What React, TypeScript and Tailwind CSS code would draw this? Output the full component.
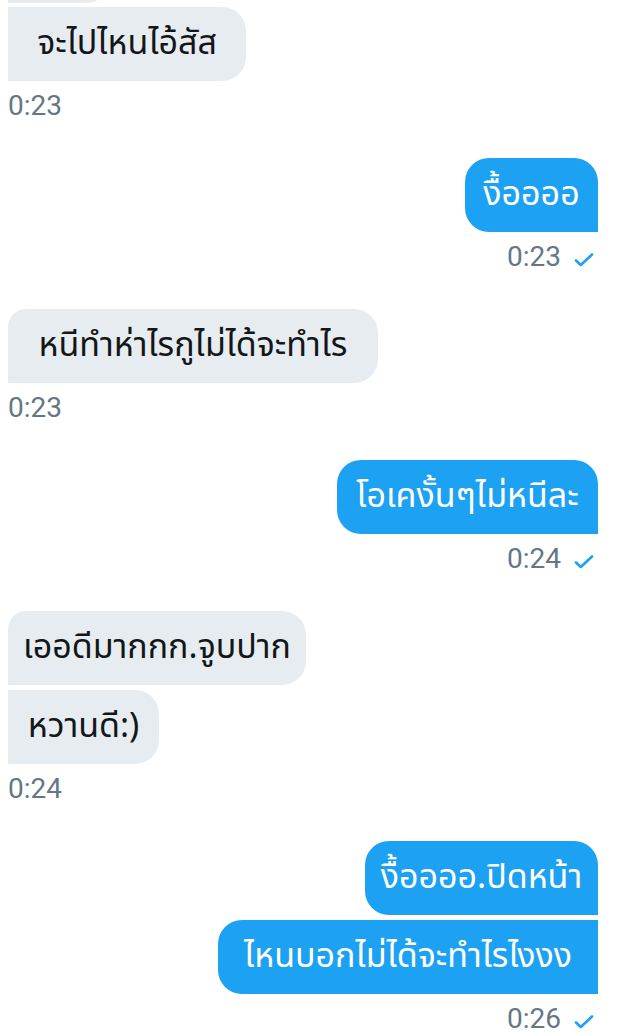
import React from "react";

type Msg = { text: string; w: number; cls: string };

const thai = { fontFamily: '"Noto Sans Thai", "Noto Sans", Roboto, sans-serif' };
const roboto = { fontFamily: 'Roboto, "Noto Sans", sans-serif' };

function Check() {
  return (
    <svg width="20" height="14" viewBox="0 0 20 14" className="ml-[13px] mb-[8px]">
      <path d="M2 7.5 L6.8 12 L18 1.5" fill="none" stroke="#1da1f2" strokeWidth="2.6" strokeLinecap="round" strokeLinejoin="round" />
    </svg>
  );
}

function Received({ text, w, cls }: Msg) {
  return (
    <div
      style={{ ...thai, width: w }}
      className={`ml-2 h-[74px] bg-[#e6ecf0] text-[#14171a] text-[34px] leading-[74px] text-center whitespace-nowrap ${cls}`}
    >
      {text}
    </div>
  );
}

function Sent({ text, w, cls }: Msg) {
  return (
    <div className="flex justify-end mr-[24px]">
      <div
        style={{ ...thai, width: w }}
        className={`h-[74px] bg-[#1da1f2] text-white text-[34px] leading-[74px] text-center whitespace-nowrap ${cls}`}
      >
        {text}
      </div>
    </div>
  );
}

function TimeLeft({ t }: { t: string }) {
  return (
    <div style={roboto} className="ml-2 mt-[7px] mb-[34px] h-[36px] leading-[36px] text-[28px] text-[#657786]">
      {t}
    </div>
  );
}

function TimeRight({ t }: { t: string }) {
  return (
    <div style={roboto} className="mr-[28px] mt-[7px] mb-[34px] h-[36px] flex items-end justify-end text-[28px] leading-[36px] text-[#657786]">
      <span>{t}</span>
      <Check />
    </div>
  );
}

export default function App() {
  return (
    <div className="w-[622px] h-[1034px] bg-white overflow-hidden">
      <div className="ml-2 mt-[-71px] h-[74px] w-[102px] bg-[#e6ecf0] rounded-r-[24px]" />
      <div className="mt-[4px]">
        <Received text="จะไปไหนไอ้สัส" w={238} cls="rounded-r-[24px]" />
      </div>
      <TimeLeft t="0:23" />

      <Sent text="งื้ออออ" w={133} cls="rounded-l-[24px] rounded-tr-[24px]" />
      <TimeRight t="0:23" />

      <Received text="หนีทำห่าไรกูไม่ได้จะทำไร" w={370} cls="rounded-r-[24px] rounded-tl-[18px]" />
      <TimeLeft t="0:23" />

      <Sent text="โอเคงั้นๆไม่หนีละ" w={261} cls="rounded-l-[24px] rounded-tr-[24px]" />
      <TimeRight t="0:24" />

      <Received text="เออดีมากกก.จูบปาก" w={298} cls="rounded-r-[24px] rounded-tl-[18px]" />
      <div className="mt-[5px]">
        <Received text="หวานดี:)" w={151} cls="rounded-r-[24px]" />
      </div>
      <TimeLeft t="0:24" />

      <Sent text="งื้ออออ.ปิดหน้า" w={233} cls="rounded-l-[24px] rounded-tr-[24px]" />
      <div className="mt-[5px]">
        <Sent text="ไหนบอกไม่ได้จะทำไรไงงง" w={380} cls="rounded-l-[24px]" />
      </div>
      <TimeRight t="0:26" />
    </div>
  );
}
